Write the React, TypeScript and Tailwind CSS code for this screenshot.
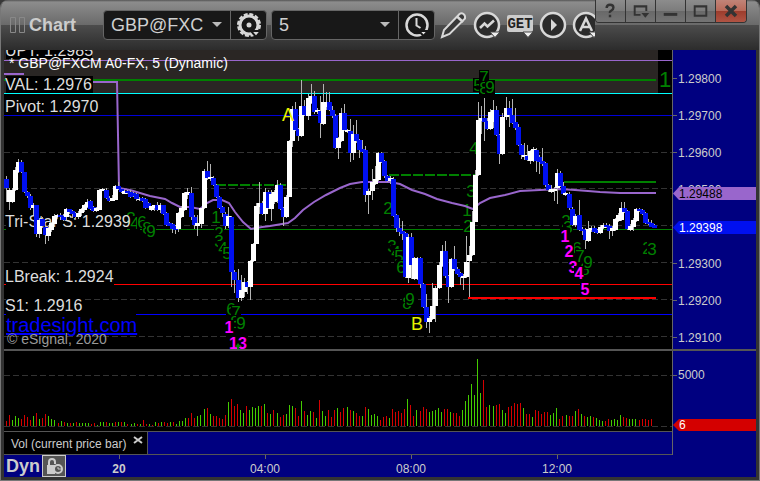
import { ReactNode } from "react";

// x, high, body top, body bottom, low, direction
const CANDLES = `
6 176 179 188 202 d|9 188 190 202 210 u|12 188 190 202 203 u|15 167 170 190 191 u|18 159 162 172 173 u|21 160 162 172 173 d|24 172 172 192 193 d|27 191 192 196 198 d|30 194 196 208 210 d|33 203 205 208 215 u|36 205 205 234 237 d|39 219 220 234 238 u
42 217 219 226 228 d|45 225 227 235 244 d|48 227 228 236 241 u|51 222 223 230 232 u|54 214 216 224 225 u|57 214 215 217 218 u|60 213 215 217 220 d|63 214 216 220 221 d|66 208 209 217 220 u|69 209 209 212 214 d|72 210 211 214 218 d|75 212 213 217 218 d|78 211 213 217 219 u|81 208 209 213 216 u|84 204 205 210 212 u|87 199 202 207 208 u
90 200 201 209 210 d|93 206 207 211 212 d|96 207 208 211 212 u|99 189 190 210 210 u|102 188 189 191 191 u|106 188 190 198 199 d|109 196 198 201 202 d|112 195 198 201 201 u|115 185 186 200 200 u|118 182 186 189 190 d|121 189 189 192 193 d|124 190 191 194 194 u|127 190 191 193 194 d|130 190 192 197 198 d|133 192 193 196 197 d|136 193 194 199 201 d|139 197 199 200 201 u
142 197 198 201 202 d|145 198 199 208 209 d|148 202 203 208 208 d|151 206 206 210 211 u|154 205 205 208 211 u|157 202 205 210 211 d|160 203 205 210 213 u|163 205 205 214 215 d|166 212 213 225 226 d|169 222 223 226 226 d|172 223 224 229 233 d|175 225 226 230 234 d|178 212 213 229 232 u|181 206 208 217 218 u|184 192 193 210 211 u|187 188 192 195 199 u
191 187 193 217 220 d|194 215 217 225 229 d|197 215 223 226 236 u|201 208 208 224 228 u|204 169 171 208 209 u|207 161 171 178 180 d|210 164 177 179 181 u|213 176 178 185 186 d|216 184 185 197 198 d|219 196 197 208 209 d|222 206 207 213 217 d|225 212 214 226 229 d|228 207 216 226 228 u|231 216 217 272 287 d|234 270 272 280 293 d|238 269 280 298 302 d|241 275 290 298 301 u|244 278 282 292 297 u|247 281 282 287 294 d|250 260 261 287 300 u|253 243 244 261 262 u|256 203 206 244 244 u
259 182 203 207 214 u|262 201 203 214 215 d|265 188 192 214 221 u|268 190 192 208 209 d|271 190 194 209 221 u|274 190 192 202 204 u|277 180 185 201 203 u|280 183 185 209 210 d|283 207 208 217 226 d|286 195 197 217 218 u|289 140 141 197 197 u|292 106 109 141 147 u|295 102 109 130 131 d|298 128 129 136 141 d|301 80 106 136 137 u|304 100 106 115 116 d|308 94 98 116 120 u|311 84 96 103 104 u|314 91 96 112 114 d|317 108 110 112 114 u|320 96 111 123 138 d|323 84 102 124 125 u|326 92 102 107 110 u|329 92 102 110 111 d|332 106 110 116 118 d
335 114 116 148 149 d|338 137 138 148 159 u|341 108 113 141 142 u|344 104 113 130 131 d|347 129 130 132 133 u|350 119 131 153 162 d|353 125 134 153 160 u|356 120 134 141 143 d|359 139 140 150 158 d|362 140 149 152 153 d|365 146 150 195 202 d|368 189 191 195 214 u|372 169 182 191 200 u|375 166 179 184 185 u|378 152 153 180 181 u|381 152 153 162 163 d|384 160 161 176 178 d|387 175 176 181 182 d|390 176 178 181 184 u|393 177 179 216 217 d|396 214 215 228 232 d|399 218 228 232 236 d|402 221 231 234 240 d|405 232 233 277 278 d|408 234 237 278 283 u
411 233 237 265 279 d|414 257 258 279 280 u|417 257 258 279 280 u|420 257 258 284 288 d|423 283 284 307 308 d|426 294 307 322 328 d|429 316 318 322 333 u|432 283 306 319 320 u|435 286 288 306 322 u|439 262 265 288 289 u|442 245 251 266 267 u|445 241 251 276 278 d|448 275 276 287 303 d|451 258 259 287 288 u|454 246 259 269 271 d|457 267 269 274 275 d|460 272 273 277 285 d|463 274 276 278 290 u|466 236 262 277 278 u|469 246 255 261 297 u|472 211 222 255 256 u|475 170 175 222 222 u|478 102 120 175 176 u|481 106 118 121 134 u|484 98 118 122 141 d|487 118 121 129 130 d
490 109 112 129 130 u|493 100 110 122 128 u|496 106 110 135 136 d|499 134 135 154 164 d|502 113 117 154 155 u|506 97 108 117 120 u|509 101 108 115 127 d|512 99 115 123 124 d|515 108 122 128 130 d|518 124 127 145 146 d|521 144 145 155 159 d|524 143 155 157 160 u|527 145 156 160 161 d|530 150 151 161 164 u|533 147 149 161 162 u|536 148 150 161 172 d|539 155 157 162 174 d|542 148 161 164 166 d|545 162 163 185 187 d|548 184 185 190 192 d|551 185 189 192 193 u|554 187 189 191 201 u|557 169 173 188 204 u|560 171 173 186 187 d|563 182 186 194 195 d|565 192 193 195 196 u|569 192 194 208 210 d
572 207 209 225 226 d|575 214 216 225 227 u|579 200 215 230 231 d|582 227 229 231 235 d|585 228 230 240 249 d|588 221 229 241 242 u|591 226 228 230 232 u|594 226 228 232 233 d|597 229 230 233 234 d|600 225 227 233 234 u|603 223 225 228 229 u|606 223 225 227 228 d|609 224 226 231 239 d|612 226 228 231 236 u|615 218 219 230 231 u|618 213 215 221 222 u|621 202 208 220 221 u|624 202 208 212 213 d|627 210 211 229 230 d|630 224 226 230 231 u|633 218 220 227 231 u|636 208 209 221 222 u|639 208 209 211 212 d|642 209 210 214 215 d|645 212 213 223 224 d|648 219 222 224 225 d|651 220 223 227 227 d|654 224 225 228 228 d`
  .trim()
  .split(/[|\n]/)
  .map((row) => row.split(" "));

// bar heights, r = down tick, g = up tick
const VOLUME = `r5 r11 g6 g10 g8 r7 r11 r9 r6 g10 r13 g7 r8 r12 g10 g7 g6 r3 g5 r4 g3 r3 g3 r4 g3 g3 g3 g3 r2 r3 g1 g4 g4 r4 g3 g3 r4 g4 r4 g4 r2 g2 g3 r2 g2 r6 r2 g2 r1 g4 r3 g4 r4 r3 g4 r4 g2 g5 g5 g8 r8 r13 r8 g10 g11 g17 r18 g12 r10 r10 r8 r7 r11 g24 r27 r20 r22 g16 g13 r20 g16 g19 g18 g20 r20 g22 r13 g12 r16 g13 r9 r11 g12 g21 g20 r18 r10 g25 r15 g11 g15 r14 g8 r26 g15 g10 r16 r9 r16 g18 r14 r18 g19
r16 g15 r13 r10 g10 r19 g17 g11 g12 g10 r6 r9 r10 g8 r17 r14 r15 r13 r17 g27 r21 r10 g16 r15 r19 r17 g14 g15 g16 g18 g14 r17 r17 g14 r13 r13 r10 g16 g25 g31 g42 g31 g67 g33 r46 r19 g21 g20 r21 r22 g16 g13 r19 r20 r23 r22 r23 g18 r12 r12 g9 r16 r15 r12 r14 r14 g11 g13 g18 r7 r10 g11 r10 r10 g15 r17 g12 r10 g9 g10 r9 g8 g6 g5 r5 r7 g6 g7 g6 g11 r9 r8 g7 g7 g7 r6 r7 r7 r6 r7`.split(/\s+/);

const GRID_LINES = [152, 188, 225, 262, 299, 336];

// countdown digits: x centre, baseline, digit, bold
const MARKS: [number, number, string, boolean?][] = [
  [131, 224, "3"],
  [135, 229, "4"],
  [142, 228, "6"],
  [147, 234, "8"],
  [151, 237, "9"],
  [216, 223, "1"],
  [219, 239, "2"],
  [219, 247, "3"],
  [223, 254, "4"],
  [227, 259, "5"],
  [231, 315, "6"],
  [236, 318, "7"],
  [235, 328, "8"],
  [241, 329, "9"],
  [229, 333, "1", true],
  [238, 349, "13", true],
  [388, 214, "2"],
  [392, 252, "3"],
  [396, 258, "4"],
  [399, 262, "5"],
  [401, 273, "6"],
  [407, 309, "8"],
  [410, 305, "9"],
  [467, 216, "1"],
  [468, 232, "2"],
  [471, 197, "3"],
  [474, 154, "4"],
  [478, 91, "5"],
  [484, 83, "7"],
  [484, 94, "8"],
  [490, 93, "9"],
  [566, 227, "2"],
  [568, 233, "3"],
  [565, 242, "1", true],
  [577, 254, "6"],
  [580, 262, "7"],
  [585, 275, "8"],
  [588, 268, "9"],
  [569, 257, "2", true],
  [573, 273, "3", true],
  [579, 279, "4", true],
  [585, 295, "5", true],
  [647, 254, "2"],
  [652, 255, "3"],
];

const AVERAGE =
  "119,188 130,190 140,193 150,196 165,199 172,203 180,207 190,207 200,209 207,203 213,200 222,200 229,203 235,212 243,222 251,229 262,227 270,226 288,223 295,218 303,210 314,202 326,195 340,188 350,184 362,182 390,182 400,184 412,190 425,194 437,199 452,203 465,206 473,209 480,203 490,198 505,195 520,191 540,190 560,189 575,190 588,191 600,192 620,193 656,193";

function ChartLabel({
  y,
  width,
  children,
}: {
  y: number;
  width: number;
  children: string;
}) {
  return (
    <g>
      <rect x={6} y={y - 14} width={width} height={17} fill="#000" />
      <text x={5} y={y} fontSize={16} fill="#ddd">
        {children}
      </text>
    </g>
  );
}

function PriceChart() {
  return (
    <svg viewBox="4 50 668 299" className="block w-full bg-black">
      <rect x={4} y={50} width={654} height={43} fill="#2a2624" />
      {GRID_LINES.map((y) => (
        <path key={y} d={`M4 ${y + 0.5}H672`} stroke="#333" strokeDasharray="6 3" />
      ))}

      {/* Levels */}
      <path d="M4 60.5H672" stroke="#9966cc" />
      <path d="M4 80H656" stroke="#008000" strokeWidth={2} />
      <path d="M4 93.5H672" stroke="#00ffff" />
      <path d="M4 115.5H672" stroke="#0000d8" />
      <path d="M4 229.5H672" stroke="#008000" />
      <path d="M4 284.5H672" stroke="#ff0000" />
      <path d="M4 314.5H672" stroke="#0000ff" />
      <path d="M216 185H287M389 175H475" stroke="#008000" strokeWidth={2} strokeDasharray="10 2" />
      <path d="M564 182H656" stroke="#008000" strokeWidth={2} />
      <path d="M468 298H656" stroke="#ff0000" strokeWidth={2} />
      <path d="M4 74H24M93 82H117L119 188" stroke="#9966cc" strokeWidth={2} fill="none" />

      {MARKS.map(([x, y, digit, bold]) => {
        const w = digit.length * 10;
        return (
          <g key={`${x}-${y}`}>
            <rect x={x - w / 2} y={y - 13} width={w} height={14} fill="#000" />
            <text
              x={x}
              y={y}
              fontSize={bold ? 16 : 17}
              textAnchor="middle"
              fontWeight={bold ? 700 : 400}
              fill={bold ? "#ff00ff" : "#008000"}
            >
              {digit}
            </text>
          </g>
        );
      })}
      <path d="M238 343l3 4h-2v2h-2v-2h-2z" fill="#008000" />
      <rect x={658} y={51} width={14} height={42} fill="#000" />
      <path d="M658 60.5H672" stroke="#9966cc" />
      <text x={659} y={87} fontSize={22} fill="#008000">1</text>

      {/* Labels */}
      <ChartLabel y={56} width={86}>UPT: 1.2985</ChartLabel>
      <ChartLabel y={90} width={87}>VAL: 1.2976</ChartLabel>
      <text x={5} y={112} fontSize={16} fill="#ddd">Pivot: 1.2970</text>
      <ChartLabel y={227} width={121}>Tri-Star S: 1.2939</ChartLabel>
      <ChartLabel y={282} width={108}>LBreak: 1.2924</ChartLabel>
      <ChartLabel y={311} width={78}>S1: 1.2916</ChartLabel>
      <path d="M4 60.5H92" stroke="#9966cc" />
      <text x={9} y={68} fontSize={14} fill="#fff">* GBP@FXCM A0-FX, 5 (Dynamic)</text>
      <rect x={6} y={314} width={130} height={19} fill="#000" />
      <a href="#tradesight">
        <text x={6} y={332} fontSize={20} fill="#0000ff" textDecoration="underline">
          tradesight.com
        </text>
      </a>
      <text x={7} y={344} fontSize={14} fill="#999">© eSignal, 2020</text>

      <polyline points={AVERAGE} stroke="#9966cc" strokeWidth={2} fill="none" />
      <g shapeRendering="crispEdges">
        {CANDLES.map(([x, high, top, bottom, low, dir]) => (
          <g key={x}>
            <rect x={x} y={high} width={1} height={+low - +high} fill="#b4b4b4" />
            <rect
              x={+x - 2}
              y={top}
              width={5}
              height={+bottom - +top}
              fill={dir === "u" ? "#fff" : "#0010f0"}
            />
          </g>
        ))}
      </g>
      <g fontSize={18} fill="#e6f000" textAnchor="middle">
        <text x={288} y={121}>A</text>
        <text x={417} y={330}>B</text>
      </g>
    </svg>
  );
}

function VolumeChart() {
  return (
    <svg viewBox="4 351 668 80" className="block w-full bg-black">
      <path d="M4 375.5H672M4 426.5H672" stroke="#333" strokeDasharray="6 3" />
      <g shapeRendering="crispEdges">
        {VOLUME.map((bar, i) => {
          const height = Number(bar.slice(1));
          return (
            <rect
              key={i}
              x={Math.floor(6.3 + i * 3.042)}
              y={426 - height}
              width={1}
              height={height}
              fill={bar[0] === "r" ? "#d40000" : "#44cc00"}
            />
          );
        })}
      </g>
    </svg>
  );
}

function Tag({ className, arrow, children }: { className: string; arrow: string; children: string }) {
  return (
    <div className={`absolute inset-x-0 flex items-center ${className}`}>
      <svg viewBox="0 0 6 12" preserveAspectRatio="none" className="h-full w-1.5 bg-[#000080]">
        <path d="M0 6L6 0V12z" fill={arrow} />
      </svg>
      <span>{children}</span>
    </div>
  );
}

function ToolButton({ label, children }: { label: string; children: ReactNode }) {
  return (
    <button aria-label={label} className="h-7 w-7 shrink-0">
      <svg viewBox="0 0 28 28" className="h-7 w-7" fill="none" stroke="#d8d8d8" strokeWidth={2}>
        {children}
      </svg>
    </button>
  );
}

function Picker({ label, value, className }: { label: string; value: string; className: string }) {
  return (
    <div className={`relative ${className}`}>
      <select
        aria-label={label}
        className="h-full w-full appearance-none bg-transparent pl-[7px] text-lg leading-none text-[#d0d0d0] outline-none"
      >
        <option>{value}</option>
      </select>
      <svg viewBox="0 0 10 5" className="pointer-events-none absolute top-[11px] right-2 h-[5px] w-2.5">
        <path d="M0 0H10L5 5z" fill="#bbb" />
      </svg>
    </div>
  );
}

const WINDOW_BUTTONS = [
  {
    label: "Help",
    icon: <path d="M11 8q0-3.500 3.500-3.500t3.500 3q0 2-2 3t-1.500 2.500M14.500 15v2.500" strokeWidth={2.5} />,
  },
  {
    label: "Window menu",
    icon: (
      <>
        <path d="M15 15H9V6h12v5M9 6.500h12" />
        <path d="M16 13h8l-4 5z" fill="#333" stroke="none" />
      </>
    ),
  },
  { label: "Minimize", icon: <path d="M8 14.500h14" strokeWidth={3} /> },
  { label: "Maximize", icon: <path d="M9 6h12v10H9zM9 6.500h12" /> },
  { label: "Close", icon: <path d="M10 6l10 10M20 6L10 16" strokeWidth={3.5} /> },
];

function TitleBar() {
  return (
    <header className="relative flex h-[50px] items-center bg-[linear-gradient(#555_0,#8c8c8c_2px,#6a6a6a_25px,#4c4c4c_25px,#2c2c2c_50px)] pl-[9px]">
      <svg viewBox="0 0 16 16" className="h-4 w-4" fill="none" stroke="#888">
        <path d="M.5 .5h5v15h-5zM9.500 .5h5v15h-5z" />
      </svg>
      <h1 className="ml-[3px] w-[74px] text-lg font-bold text-[#ccc]">Chart</h1>

      <div className="flex h-[30px] w-[164px] rounded border border-[#666] bg-[#181818]">
        <Picker label="Symbol" value="GBP@FXC" className="w-[127px] border-r border-[#666]" />
        <div className="pl-1">
          <ToolButton label="Settings">
            <circle cx={14} cy={14} r={9} strokeWidth={3} />
            <circle cx={14} cy={14} r={11} strokeWidth={2} strokeDasharray="4 1.760" />
            <circle cx={14} cy={14} r={2.5} fill="#d8d8d8" stroke="none" />
            <path d="M16 20h10l-5 6z" fill="#d8d8d8" stroke="#181818" />
          </ToolButton>
        </div>
      </div>

      <div className="ml-1 flex h-[30px] w-[164px] rounded border border-[#666] bg-[#181818]">
        <Picker label="Interval" value="5" className="w-[127px] border-r border-[#666]" />
        <div className="pl-1">
          <ToolButton label="Time template">
            <circle cx={14} cy={14} r={10.5} strokeWidth={2.5} />
            <path d="M13.500 7v7.500l4 2.500" />
            <path d="M16 20h9l-4.500 5z" fill="#e8e8e8" stroke="#181818" />
          </ToolButton>
        </div>
      </div>

      <div className="flex w-[160px] gap-[5px] overflow-hidden pl-[5px]">
        <ToolButton label="Draw">
          <path d="M2 26l2-7L19.500 3q2-1.500 4 0t1.500 4.500L9.500 23z" fill="#383838" />
          <path d="M17 5.500l6 5.500" strokeWidth={2.5} />
        </ToolButton>
        <ToolButton label="Studies">
          <circle cx={14} cy={14} r={12} fill="#2b2b2b" strokeWidth={2.5} />
          <path d="M7 17l4.500-4.500 3 3 6.500-6" strokeWidth={2.5} />
          <path d="M17 21h10l-5 5.500z" fill="#eee" stroke="#444" strokeWidth={1} />
        </ToolButton>
        <ToolButton label="Advanced GET">
          <rect x={1} y={4} width={26} height={17} rx={2} fill="#ccc" stroke="none" />
          <text
            x={14}
            y={17}
            textAnchor="middle"
            fontSize={14}
            fontWeight={700}
            fontFamily="Liberation Mono, monospace"
            fill="#222"
            stroke="none"
          >
            GET
          </text>
          <path d="M17 21h10l-5 5.500z" fill="#eee" stroke="#444" strokeWidth={1} />
        </ToolButton>
        <ToolButton label="Play">
          <circle cx={14} cy={14} r={12} fill="#2b2b2b" strokeWidth={2.5} />
          <path d="M12 8v12l6-6z" fill="#d8d8d8" stroke="none" />
        </ToolButton>
        <ToolButton label="Alerts">
          <circle cx={14} cy={14} r={12} fill="#2b2b2b" strokeWidth={2.5} />
          <path d="M8 20l6-12.500 6 12.500M10 16h8" strokeWidth={2.5} />
          <path d="M17 21h10l-5 5.500z" fill="#eee" stroke="#444" strokeWidth={1} />
        </ToolButton>
      </div>

      <div className="absolute top-0 right-3 flex overflow-hidden rounded-b border border-t-0 border-[#333]">
        {WINDOW_BUTTONS.map(({ label, icon }) => (
          <button
            key={label}
            aria-label={label}
            className={`h-[22px] w-[30px] border-r border-[#333] last:border-r-0 ${
              label === "Close"
                ? "bg-[linear-gradient(#c08478,#b86858_50%,#9c3c2c_50%,#b05444)]"
                : "bg-[linear-gradient(#8c8c8c,#7c7c7c_50%,#686868_50%,#747474)]"
            }`}
          >
            <svg viewBox="0 0 30 22" className="h-full w-full" fill="none" stroke="#333" strokeWidth={2}>
              {icon}
            </svg>
          </button>
        ))}
      </div>
    </header>
  );
}

const PRICES = ["1.29800", "1.29700", "1.29600", "1.29500", "1.29400", "1.29300", "1.29200", "1.29100"];

export default function App() {
  return (
    <div className="bg-[#383838] font-['Liberation_Sans',Arial,sans-serif]">
      <div className="overflow-hidden rounded-t-lg border-x border-b border-[#777] bg-[#333]">
        <TitleBar />
        <main className="mx-[3px] mb-[3px] bg-[#000080] text-xs text-[#ccc]">
          <div className="flex">
            <div className="min-w-0 flex-1">
              <PriceChart />
            </div>
            <div className="relative w-[84px] border-l border-[#666] pt-[10px]">
              <div className="-mb-2">
                {PRICES.map((price) => (
                  <div key={price} className="flex h-[37px] items-center gap-px">
                    <span className="h-px w-1 bg-[#666]" />
                    {price}
                  </div>
                ))}
              </div>
              <Tag className="top-[137px] h-[13px] bg-[#9966cc] text-black" arrow="#9966cc">
                1.29488
              </Tag>
              <Tag className="top-[171px] h-[13px] bg-[#0010f0] text-white" arrow="#0010f0">
                1.29398
              </Tag>
            </div>
          </div>

          <div className="relative h-0.5 bg-[#555]" />

          <div className="flex">
            <div className="min-w-0 flex-1">
              <VolumeChart />
              <div className="flex h-6 border-y border-[#555]">
                <div className="flex w-36 justify-between border-r border-[#555] bg-black pt-1 pr-1 pl-[7px]">
                  <span>Vol (current price bar)</span>
                  <button aria-label="Close study" className="h-2 w-2.5">
                    <svg viewBox="0 0 10 8" stroke="#ccc" strokeWidth={2}>
                      <path d="M1 1l8 6M9 1L1 7" />
                    </svg>
                  </button>
                </div>
              </div>
            </div>
            <div className="relative w-[84px] border-l border-[#666]">
              <div className="flex h-12 items-center gap-px">
                <span className="h-px w-1 bg-[#666]" />
                5000
              </div>
              <Tag className="top-[68px] h-3 bg-[#d40000] text-white" arrow="#d40000">
                6
              </Tag>
            </div>
          </div>

          {/* Time axis */}
          <div className="flex h-[22px]">
            <div className="flex w-[62px] items-center justify-between pl-0.5">
              <span className="text-lg leading-none font-bold">Dyn</span>
              <button aria-label="Lock time range" className="h-[22px] w-6 border border-[#ccc] bg-[#555]">
                <svg viewBox="0 0 22 20" className="h-full w-full" fill="none" stroke="#ccc" strokeWidth={2}>
                  <path d="M6 10V6q0-3 3-3t3 3v2" />
                  <path d="M4 9h8v9H4z" fill="#ccc" stroke="none" />
                  <circle cx={15} cy={13} r={4} fill="#555" />
                  <path d="M15 11v2h3" strokeWidth={1} />
                </svg>
              </button>
            </div>
            <div className="flex gap-10">
              {["20", "04:00", "08:00", "12:00"].map((time) => (
                <div key={time} className="flex w-[106px] flex-col items-center">
                  <span className="h-1 w-px bg-[#666]" />
                  <span className={time === "20" ? "pt-0.5 font-bold" : "pt-0.5"}>{time}</span>
                </div>
              ))}
            </div>
          </div>
        </main>
      </div>
    </div>
  );
}
